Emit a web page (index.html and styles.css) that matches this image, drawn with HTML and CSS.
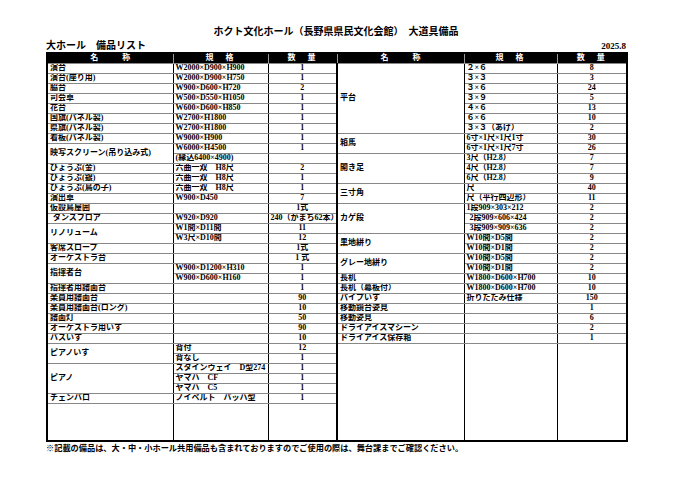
FILE: index.html
```html
<!DOCTYPE html>
<html lang="ja">
<head>
<meta charset="utf-8">
<title>大道具備品</title>
<link rel="stylesheet" href="styles.css">
</head>
<body>
<div class="page">
  <h1 class="title">ホクト文化ホール（長野県県民文化会館）　大道具備品</h1>
  <div class="sub"><span>大ホール　備品リスト</span><span class="date">2025.8</span></div>
  <table class="list">
    <colgroup>
      <col class="w-n1"><col class="w-s1"><col class="w-q1"><col class="w-n2"><col class="w-s2"><col class="w-q2">
    </colgroup>
    <thead>
      <tr><th>名　　　称</th><th class="sp">規　格</th><th class="sp">数　量</th><th>名　　　称</th><th class="sp">規　格</th><th class="sp">数　量</th></tr>
    </thead>
    <tbody>
      <tr><td>演台</td><td>W2000×D900×H900</td><td class="q">1</td><td class="c" rowspan="7">平台</td><td>２×６</td><td class="q">8</td></tr>
      <tr><td>演台(座り用)</td><td>W2000×D900×H750</td><td class="q">1</td><td>３×３</td><td class="q">3</td></tr>
      <tr><td>脇台</td><td>W900×D600×H720</td><td class="q">2</td><td>３×６</td><td class="q">24</td></tr>
      <tr><td>司会卓</td><td>W500×D550×H1050</td><td class="q">1</td><td>３×９</td><td class="q">5</td></tr>
      <tr><td>花台</td><td>W600×D600×H850</td><td class="q">1</td><td>４×６</td><td class="q">13</td></tr>
      <tr><td>国旗(パネル製)</td><td>W2700×H1800</td><td class="q">1</td><td>６×６</td><td class="q">10</td></tr>
      <tr><td>県旗(パネル製)</td><td>W2700×H1800</td><td class="q">1</td><td>３×３（あげ）</td><td class="q">2</td></tr>
      <tr><td>看板(パネル製)</td><td>W9000×H900</td><td class="q">1</td><td class="c" rowspan="2">箱馬</td><td>6寸×1尺×1尺1寸</td><td class="q">30</td></tr>
      <tr><td rowspan="2">映写スクリーン(吊り込み式)</td><td>W6000×H4500</td><td class="q">1</td><td>6寸×1尺×1尺7寸</td><td class="q">26</td></tr>
      <tr><td>(縁込6400×4900)</td><td class="q"></td><td class="c" rowspan="3">開き足</td><td>3尺（H2.8）</td><td class="q">7</td></tr>
      <tr><td>びょうぶ(金)</td><td>六曲一双　H8尺</td><td class="q">2</td><td>4尺（H2.8）</td><td class="q">7</td></tr>
      <tr><td>びょうぶ(銀)</td><td>六曲一双　H8尺</td><td class="q">1</td><td>6尺（H2.8）</td><td class="q">9</td></tr>
      <tr><td>びょうぶ(鳥の子)</td><td>六曲一双　H8尺</td><td class="q">1</td><td class="c" rowspan="2">三寸角</td><td>尺</td><td class="q">40</td></tr>
      <tr><td>演出卓</td><td>W900×D450</td><td class="q">7</td><td>尺（平行四辺形）</td><td class="q">11</td></tr>
      <tr><td>仮設鳥屋囲</td><td></td><td class="q">1式</td><td class="c" rowspan="3">カゲ段</td><td>1段909×303×212</td><td class="q">2</td></tr>
      <tr><td class="ind">ダンスフロア</td><td>W920×D920</td><td class="q">240（かまち62本）</td><td class="ind">2段909×606×424</td><td class="q">2</td></tr>
      <tr><td rowspan="2">リノリューム</td><td>W1間×D11間</td><td class="q">11</td><td class="ind">3段909×909×636</td><td class="q">2</td></tr>
      <tr><td>W3尺×D10間</td><td class="q">12</td><td class="c" rowspan="2">黒地絣り</td><td>W10間×D5間</td><td class="q">2</td></tr>
      <tr><td>客席スロープ</td><td></td><td class="q">1式</td><td>W10間×D1間</td><td class="q">2</td></tr>
      <tr><td>オーケストラ台</td><td></td><td class="q">1 式</td><td class="c" rowspan="2">グレー地絣り</td><td>W10間×D5間</td><td class="q">2</td></tr>
      <tr><td rowspan="2">指揮者台</td><td>W900×D1200×H310</td><td class="q">1</td><td>W10間×D1間</td><td class="q">2</td></tr>
      <tr><td>W900×D600×H160</td><td class="q">1</td><td class="c">長机</td><td>W1800×D600×H700</td><td class="q">10</td></tr>
      <tr><td>指揮者用譜面台</td><td></td><td class="q">1</td><td class="c">長机（幕板付）</td><td>W1800×D600×H700</td><td class="q">10</td></tr>
      <tr><td>楽員用譜面台</td><td></td><td class="q">90</td><td class="c">パイプいす</td><td>折りたたみ仕様</td><td class="q">150</td></tr>
      <tr><td>楽員用譜面台(ロング)</td><td></td><td class="q">10</td><td class="c">移動鏡台姿見</td><td></td><td class="q">1</td></tr>
      <tr><td>譜面灯</td><td></td><td class="q">50</td><td class="c">移動姿見</td><td></td><td class="q">6</td></tr>
      <tr><td>オーケストラ用いす</td><td></td><td class="q">90</td><td class="c">ドライアイスマシーン</td><td></td><td class="q">2</td></tr>
      <tr><td>バスいす</td><td></td><td class="q">10</td><td class="c">ドライアイス保存箱</td><td></td><td class="q">1</td></tr>
      <tr><td rowspan="2">ピアノいす</td><td>背付</td><td class="q">12</td><td class="c" rowspan="7"></td><td rowspan="7"></td><td rowspan="7"></td></tr>
      <tr><td>背なし</td><td class="q">1</td></tr>
      <tr><td rowspan="3">ピアノ</td><td>スタインウェイ　D型274</td><td class="q">1</td></tr>
      <tr><td>ヤマハ　CF</td><td class="q">1</td></tr>
      <tr><td>ヤマハ　C5</td><td class="q">1</td></tr>
      <tr><td>チェンバロ</td><td>ノイベルト　バッハ型</td><td class="q">1</td></tr>
      <tr class="fill"><td></td><td></td><td></td></tr>
    </tbody>
  </table>
  <p class="note">※記載の備品は、大・中・小ホール共用備品も含まれておりますのでご使用の際は、舞台課までご確認ください。</p>
</div>
</body>
</html>
```

FILE: styles.css
```css
* { box-sizing: border-box; }
html, body { margin: 0; padding: 0; background: #fff; }
body {
  color: #000;
  font-family: "Liberation Serif", "Noto Sans CJK JP", serif;
  font-weight: 700;
}
.page {
  width: 680px;
  height: 481px;
  padding: 26px 54px 0 46px;
  overflow: hidden;
}
.title {
  margin: 0 0 2px;
  font-size: 10px;
  line-height: 12px;
  font-weight: 700;
  text-align: center;
}
.sub {
  display: flex;
  justify-content: space-between;
  align-items: baseline;
  font-size: 10px;
  line-height: 11px;
}
.sub .date { font-size: 9px; }
.list {
  width: 580px;
  border-collapse: collapse;
  table-layout: fixed;
  border: 2px solid #000;
  font-size: 8px;
  line-height: 8px;
}
.w-n1 { width: 126px; }
.w-s1 { width: 95px; }
.w-q1 { width: 69px; }
.w-n2 { width: 127px; }
.w-s2 { width: 93px; }
.w-q2 { width: 70px; }
.list th {
  height: 10px;
  padding: 0;
  background: #000;
  color: #fff;
  font-weight: 700;
  text-align: center;
  border-right: 1px solid #999;
}
.list th.sp { letter-spacing: 2px; }
.list td {
  height: 10px;
  padding: 0 2px;
  border-top: 1px solid #888;
  border-bottom: 1px solid #888;
  border-left: 1px solid #000;
  border-right: 1px solid #000;
  white-space: nowrap;
  overflow: hidden;
  vertical-align: middle;
}
.list td.q { text-align: center; }
.list td.c { border-left: 2px solid #000; }
.list td.ind { padding-left: 5px; }
.list tr.fill td { height: 38px; }
.note {
  margin: 2px 0 0;
  font-size: 8.2px;
  line-height: 10px;
}
```
